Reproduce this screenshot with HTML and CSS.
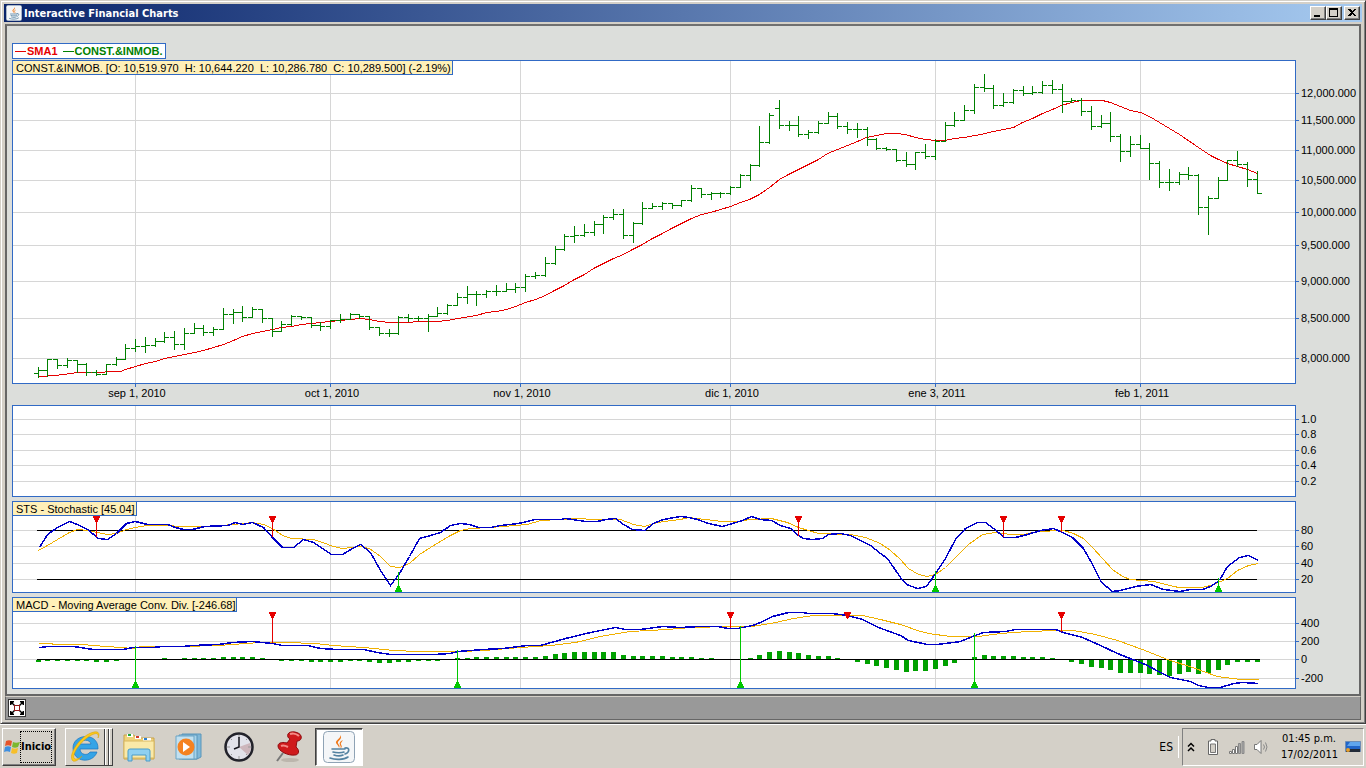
FILE: index.html
```html
<!DOCTYPE html>
<html lang="es">
<head>
    <meta charset="UTF-8">
    <meta name="viewport" content="width=device-width, initial-scale=1.0">
    <title>Interactive Financial Charts</title>
    <link rel="stylesheet" href="styles.css">
</head>
<body>
    <!-- Shared symbols -->
    <svg class="symbols" aria-hidden="true">
        <symbol id="java" viewBox="0 0 32 32">
            <rect x="0.5" y="0.5" width="31" height="31" rx="4" fill="#f4f6f8" stroke="#8fa3b5"/>
            <path d="M17 4c2 3-5 5-4 8 1 2 3 3 3 5 2-3-2-4-1-6 1-2 5-4 2-7zM20 9c-3 1-4 3-3 5s1 2 0 4c4-3 0-4 1-6z" fill="#f07a1c"/>
            <path d="M9 18h13M10 21c3 1 9 1 11 0M11 24c3 1 7 1 9 0M7 27c5 2 14 2 18-1M22 17c5-1 5 4 0 6" fill="none" stroke="#5382a1" stroke-width="1.6" stroke-linecap="round"/>
        </symbol>
    </svg>

    <div class="window">
        <!-- Title bar -->
        <div class="title-bar">
            <svg class="title-icon"><use href="#java"/></svg>
            <h1>Interactive Financial Charts</h1>
            <div class="title-buttons">
                <button aria-label="Minimizar"><svg viewBox="0 0 12 10"><path d="M2 7h6v2H2z"/></svg></button>
                <button aria-label="Maximizar"><svg viewBox="0 0 12 10"><path d="M1 0h9v9H1zM2 2v6h7V2z" fill-rule="evenodd"/></svg></button>
                <button class="close" aria-label="Cerrar"><svg viewBox="0 0 12 10"><path d="M2 1h2l2 2 2-2h2L7 4.500 10 8H8L6 6 4 8H2l3-3.500z"/></svg></button>
            </div>
        </div>

        <!-- Charts -->
        <main class="charts">
            <div class="legend">
                <span class="sma">SMA1</span>
                <span class="price">CONST.&amp;INMOB.</span>
            </div>
            <section class="panel">
                <div class="label">CONST.&amp;INMOB. [O: 10,519.970&nbsp; H: 10,644.220&nbsp; L: 10,286.780&nbsp; C: 10,289.500] (-2.19%)</div>
                <svg id="priceChart" viewBox="12 60 1347 345"></svg>
            </section>
            <section class="panel">
                <svg id="emptyChart" viewBox="12 405 1347 96"></svg>
            </section>
            <section class="panel">
                <div class="label">STS - Stochastic [45.04]</div>
                <svg id="stsChart" viewBox="12 501 1347 96"></svg>
            </section>
            <section class="panel">
                <div class="label">MACD - Moving Average Conv. Div. [-246.68]</div>
                <svg id="macdChart" viewBox="12 597 1347 96"></svg>
            </section>
        </main>

        <div class="toolbar">
            <button aria-label="Ajustar"><svg viewBox="0 0 16 16">
                <path d="M1 1h4v1L4 3l2 2-1 1-2-2-1 1H1zM15 1h-4v1l1 1-2 2 1 1 2-2 1 1h1zM1 15h4v-1l-1-1 2-2-1-1-2 2-1-1H1zM15 15h-4v-1l1-1-2-2 1-1 2 2 1-1h1z"/>
                <rect x="5.500" y="5.500" width="5" height="5" fill="#fff" stroke="#901818"/>
            </svg></button>
        </div>
    </div>

    <!-- Taskbar -->
    <footer class="taskbar">
        <button class="start">
            <svg viewBox="0 0 16 16">
                <path d="M2 2c2-1 4-1 6 0L7 7C5 6 3 6 1 7z" fill="#e5532a"/>
                <path d="M9 3c2 1 4 1 7 0l-2 5c-2 1-4 1-6 0z" fill="#7cb82f"/>
                <path d="M1 8c2-1 4-1 6 0l-1 5c-2-1-4-1-6 0z" fill="#3f8fe0"/>
                <path d="M8 9c2 1 4 1 6 0l-1 5c-2 1-4 1-6 0z" fill="#f7bf2a"/>
            </svg>
            <span>Inicio</span>
        </button>
        <button class="task raised" aria-label="Internet Explorer">
            <svg viewBox="0 0 32 32">
                <path d="M29 18H11c0 6 8 7 10 3h7c-4 12-24 11-24-4C4 2 30 1 29 18zM11 13h11c-1-5-10-5-11 0z" fill="#35a4e6" stroke="#1a74bd" stroke-width="0.700"/>
                <path d="M4 30c-6-5 7-26 21-29 5-1 6 2 4 6 1-4-1-5-4-4C14 7 3 22 5 27c1 2 5 1 8-2-3 4-7 6-9 5z" fill="#fbc91c" stroke="#d99a00" stroke-width="0.500"/>
            </svg>
        </button>
        <button class="task" aria-label="Explorador de Windows">
            <svg viewBox="0 0 32 32">
                <path d="M1 4h10l2 3h18v21H1z" fill="#f0d27a" stroke="#c9a349"/>
                <path d="M4 3h6v3H4zM12 5h6v3h-6zM20 7h8v3h-8z" fill="#fff"/>
                <path d="M5 3h3v2H5z" fill="#1ba83a"/><path d="M13 5h3v2h-3z" fill="#d13b2a"/><path d="M21 7h3v2h-3z" fill="#2a7fd1"/>
                <path d="M1 10h30v17H1z" fill="#fae9a8" stroke="#d8b860"/>
                <path d="M5 30V20q0-2 2-2h18q2 0 2 2v10h-4v-6H9v6z" fill="#8fd0f0" stroke="#4a9cc9"/>
            </svg>
        </button>
        <button class="task" aria-label="Reproductor multimedia">
            <svg viewBox="0 0 32 32">
                <path d="M9 3h19v23l-4 2H9z" fill="#7fb7d8" stroke="#5b96ba"/>
                <path d="M6 4h18v24H6z" fill="#a7d3ea" stroke="#5b96ba"/>
                <path d="M3 5h18v23H3z" fill="#c2e0f0" stroke="#6aa5c6"/>
                <circle cx="13" cy="16" r="8.500" fill="#f58220"/><path d="M10 11v10l7-5z" fill="#fff"/>
            </svg>
        </button>
        <button class="task" aria-label="Reloj">
            <svg viewBox="0 0 32 32">
                <circle cx="16" cy="16" r="13.500" fill="#e2e2ea" stroke="#22222a" stroke-width="2.500"/>
                <path d="M16 16l11-4a12 12 0 0 1-2 12z" fill="#cdb6bc"/>
                <path d="M16 4v3M16 25v3M4 16h3M25 16h3M8 8l1 1M24 8l-1 1M8 24l1-1M24 24l-1-1" stroke="#999"/>
                <path d="M16 6v10l-5 2" fill="none" stroke="#15151d" stroke-width="1.500"/>
            </svg>
        </button>
        <button class="task" aria-label="Notas">
            <svg viewBox="0 0 32 32">
                <ellipse cx="17" cy="29" rx="9" ry="2" fill="#bcb6ad"/>
                <path d="M10 22L4 30" stroke="#777" stroke-width="2"/>
                <path d="M15 3c2-4 12-2 13 2 1 3-1 5-4 5l-1 6c4 3 3 8-1 8-7 1-17-4-17-9 0-4 6-4 9-3l3-4c-2-1-3-3-2-5z" fill="#cf1a1c" stroke="#8f0c10"/>
                <path d="M17 3c3-1 7 0 9 2M8 15c2-1 5 0 7 1" fill="none" stroke="#f48b86" stroke-width="2"/>
            </svg>
        </button>
        <button class="task pressed" aria-label="Interactive Financial Charts"><svg><use href="#java"/></svg></button>

        <span class="lang">ES</span>
        <div class="tray">
            <svg class="chevrons" viewBox="0 0 8 10"><path d="M1 4.500l3-3 3 3M1 9l3-3 3 3"/></svg>
            <svg viewBox="0 0 16 16">
                <path d="M6 .5h4v1.500h2.500v13.500h-9V2H6z" fill="#fff" stroke="#666"/><path d="M5.500 5h5v8.500h-5z" fill="#d4d0c8" stroke="#777"/>
            </svg>
            <svg viewBox="0 0 16 16">
                <path d="M.5 12.500h2v2h-2zM3.500 10.500h2v4h-2zM6.500 7.500h2v7h-2z" fill="#fff" stroke="#777"/>
                <path d="M9.500 4.500h2v10h-2zM13 2.500h2v12h-2z" fill="#aaa" stroke="#888"/>
            </svg>
            <svg viewBox="0 0 16 16">
                <path d="M1.500 5.500H4L8 1.500v13L4 10.500H1.500z" fill="#fff" stroke="#777"/>
                <path d="M10.500 5.500q2 2.500 0 5M12.500 3.500q3 4.500 0 9" fill="none" stroke="#888"/>
            </svg>
            <div class="clock"><time>01:45 p.m.</time><time>17/02/2011</time></div>
            <svg viewBox="0 0 16 16">
                <path d="M.5 2.500h15v10H.5z" fill="#2165c9" stroke="#6d8db5"/><path d="M5 3h10v4H2z" fill="#5fa5ee"/>
                <path d="M1 10h14v3H1z" fill="#222b38"/><circle cx="3" cy="11" r="2" fill="#e39d2c"/>
            </svg>
        </div>
    </footer>

    <script src="charts.js"></script>
</body>
</html>
```

FILE: styles.css
```css
        /* General body styling */
        body {
            margin: 0;
            min-height: 100vh;
            display: flex;
            flex-direction: column;
            background-color: #d4d0c8;
            font-family: 'Liberation Sans', Arial, sans-serif;
            font-size: 11px;
            color: #000;
        }

        button {
            font: inherit;
            color: inherit;
            padding: 0;
            border: 0;
            background: none;
        }

        svg {
            display: block;
            flex-shrink: 0;
        }

        .symbols {
            position: absolute;
            width: 0;
            height: 0;
        }

        /* Window frame */
        .window {
            border: 1px solid #d4d0c8;
            border-right-color: #404040;
            border-bottom-color: #404040;
            box-shadow: inset 1px 1px #fff, inset -1px -1px #808080;
            padding: 3px;
        }

        .title-bar {
            display: flex;
            align-items: center;
            gap: 2px;
            height: 18px;
            padding: 0 2px;
            background: linear-gradient(to right, #0a246a, #a6caf0);
        }

        .title-icon {
            width: 16px;
            height: 16px;
        }

        .title-bar h1 {
            flex: 1;
            margin: 0;
            color: #fff;
            font-family: 'DejaVu Sans Condensed', 'DejaVu Sans', sans-serif;
            font-size: 11px;
            font-weight: bold;
        }

        .title-buttons {
            display: flex;
        }

        .title-buttons button {
            width: 16px;
            height: 14px;
            background-color: #d4d0c8;
            border: 1px solid;
            border-color: #fff #404040 #404040 #fff;
            box-shadow: inset -1px -1px #808080;
        }

        .title-buttons .close {
            margin-left: 2px;
        }

        .title-buttons svg {
            width: 12px;
            height: 10px;
            margin: 1px;
            shape-rendering: crispEdges;
        }

        /* Chart area */
        .charts {
            margin: 2px 1px 0;
            padding: 17px 0 1px 5px;
            background-color: #dcdedb;
            border: 2px solid #666;
            border-top-color: #707070;
        }

        .legend {
            display: flex;
            gap: 5px;
            width: max-content;
            height: 14px;
            line-height: 15px;
            padding: 0 2px;
            margin-bottom: 1px;
            background-color: #fff;
            border: 1px solid #316ac5;
            font-weight: bold;
        }

        .legend span {
            display: flex;
            align-items: center;
            gap: 1px;
        }

        .legend span::before {
            content: "";
            width: 11px;
            height: 1px;
            background-color: currentColor;
        }

        .sma {
            color: #e60000;
        }

        .price {
            color: #008000;
        }

        .panel {
            position: relative;
        }

        .panel svg {
            width: 100%;
            height: auto;
            shape-rendering: crispEdges;
        }

        /* Caption over the top left corner of a panel */
        .label {
            position: absolute;
            top: 0;
            left: 0;
            height: 13px;
            line-height: 14px;
            padding: 0 1px 0 3px;
            background-color: #fff0b8;
            border: 1px solid #316ac5;
            white-space: nowrap;
        }

        .plot {
            fill: #fff;
        }

        .frame {
            fill: none;
            stroke: #316ac5;
        }

        .grid {
            stroke: #d6d6d6;
            fill: none;
        }

        .level {
            stroke: #000;
        }

        .ohlc {
            stroke: #008000;
            fill: none;
        }

        .average {
            stroke: #e60000;
            fill: none;
        }

        .signal {
            stroke: #f0b000;
            fill: none;
        }

        .value {
            stroke: #0000c8;
            stroke-width: 1.5;
            fill: none;
        }

        .histogram {
            fill: #00a000;
        }

        .sell {
            fill: #e60000;
        }

        .buy {
            fill: #00c800;
        }

        .panel text {
            font-size: 11px;
        }

        .month {
            text-anchor: middle;
        }

        /* Toolbar under the charts */
        .toolbar {
            margin: 0 1px;
            padding: 2px;
            height: 18px;
            background-color: #999;
            border: 1px solid #666;
            border-top-color: #d4d0c8;
        }

        .toolbar button {
            background-color: #fff;
            border: 1px solid #333;
        }

        .toolbar svg {
            width: 16px;
            height: 16px;
        }

        /* Taskbar */
        .taskbar {
            display: flex;
            align-items: center;
            flex: 1;
            padding: 0 2px;
            border-top: 1px solid #fff;
            font-family: 'DejaVu Sans Condensed', 'DejaVu Sans', sans-serif;
        }

        .start {
            display: flex;
            align-items: center;
            width: 54px;
            height: 38px;
            padding-left: 1px;
            margin-right: 9px;
            border: 1px solid;
            border-color: #fff #404040 #404040 #fff;
            box-shadow: inset -1px -1px #808080;
            font-weight: bold;
        }

        .start svg {
            width: 16px;
            height: 16px;
        }

        .start span {
            line-height: 30px;
            border: 1px dotted #000;
        }

        .task {
            display: flex;
            align-items: center;
            justify-content: center;
            width: 48px;
            height: 38px;
            margin-right: 2px;
        }

        .task svg {
            width: 32px;
            height: 32px;
        }

        .raised {
            justify-content: flex-start;
            padding-left: 3px;
            border: 1px solid;
            border-color: #fff #404040 #404040 #fff;
            background: linear-gradient(to right, transparent 38px, #404040 38px 39px, #fff 39px 40px, transparent 40px 42px, #404040 42px 43px, #fff 43px 44px, transparent 44px);
        }

        .pressed {
            background-color: #fff;
            border: 1px solid;
            border-color: #404040 #fff #fff #404040;
            box-shadow: inset 1px 1px #808080;
        }

        .lang {
            margin-left: auto;
            padding-right: 5px;
            border-right: 1px solid #fff;
            font-size: 12px;
            line-height: 22px;
        }

        .tray {
            display: flex;
            align-items: center;
            gap: 8px;
            height: 36px;
            margin-left: 3px;
            padding: 0 2px 0 4px;
            border: 1px solid;
            border-color: #808080 #fff #fff #808080;
        }

        .tray svg {
            width: 16px;
            height: 16px;
        }

        .tray .chevrons {
            width: 8px;
            height: 10px;
            margin-right: 2px;
            fill: none;
            stroke: #000;
            stroke-width: 1.5;
        }

        .clock {
            display: flex;
            flex-direction: column;
            width: 56px;
            margin-left: 4px;
            line-height: 16px;
            text-align: center;
            white-space: nowrap;
        }
```

FILE: charts.js
```js
// x position of bar i
function barX(i) {
    return Math.floor(38.1 + 9.753 * i);
}

const months = [[135, 'sep 1, 2010'], [330, 'oct 1, 2010'], [520, 'nov 1, 2010'], [730, 'dic 1, 2010'], [935, 'ene 3, 2011'], [1140, 'feb 1, 2011']];

// high, low, close of each day, as heights on the chart
const days = [
    [367,377,370],[359,376,359],[359,368,365],[358,367,360],[360,372,364],[363,375,372],[370,375,374],[364,374,364],[357,365,359],[344,359,348],
    [339,351,346],[337,352,345],[338,346,341],[332,342,337],[331,349,344],[328,349,333],[323,333,328],[325,335,332],[327,335,329],[308,329,314],
    [309,323,312],[306,321,317],[307,317,309],[309,322,318],[318,336,331],[321,331,324],[315,325,316],[316,319,317],[317,327,325],[322,330,326],
    [320,328,320],[314,322,319],[313,319,314],[314,318,316],[316,329,327],[327,335,333],[329,336,333],[316,334,317],[314,321,318],[316,320,318],
    [314,331,316],[307,316,313],[304,314,305],[293,305,297],[286,303,294],[291,305,294],[290,297,291],[285,295,291],[283,291,289],[283,292,287],
    [274,291,276],[272,278,275],[257,276,263],[246,264,249],[234,250,236],[226,242,235],[224,236,232],[221,235,224],[215,233,217],[209,219,214],
    [209,238,235],[222,242,223],[202,224,208],[203,208,206],[202,209,203],[203,208,205],[200,206,200],[185,201,188],[188,197,194],[192,199,193],
    [192,197,193],[186,194,187],[174,187,175],[164,180,165],[126,166,142],[113,143,115],[100,128,125,108],[121,130,125],[116,136,134],[130,138,132],
    [121,133,123],[112,123,116],[113,128,126],[122,133,129],[123,137,129],[127,145,139],[138,149,148],[147,150,149],[149,161,160],[152,166,164],
    [152,169,152],[144,158,156],[139,159,141],[122,141,125],[112,126,120],[105,120,110],[84,113,87],[74,91,88],[85,108,105],[93,106,102],
    [89,103,90],[86,95,93],[86,94,92],[81,93,85],[80,93,89],[84,112,101],[98,102,100],[98,115,111],[106,129,126],[115,127,123],
    [112,141,136],[134,161,151],[136,156,144],[135,148,148],[143,179,163],[161,187,182],[169,190,182],[172,184,174],[167,179,175],[174,214,207],
    [196,234,198],[177,198,180],[160,180,160],[151,166,164],[162,186,179],[171,193,193]
];

const sma = '39,376 55,375 70,373 77,372 90,372 120,371 125,369 135,366 145,363 155,361 164,358 174,356 184,354 194,352 203,350 213,347 223,344 233,340 242,336 252,333 262,331 272,329 281,327 291,326 301,324 311,323 320,322 330,321 340,320 350,319 359,318 369,319 379,321 389,322 408,322 418,321 437,321 447,320 457,318 476,315 486,312 496,311 506,309 515,306 525,302 535,299 545,295 554,290 564,285 574,279 584,274 593,268 603,263 613,258 623,254 632,249 642,244 652,238 662,233 671,228 681,223 691,218 701,214 710,212 720,209 730,206 740,202 749,199 759,194 769,187 779,179 788,174 798,169 808,164 818,159 827,153 837,149 847,145 857,141 866,137 876,135 886,133 896,133 905,134 915,137 925,139 935,140 944,140 954,138 964,137 980,134 993,131 1003,129 1013,127 1022,122 1032,118 1042,113 1052,109 1061,105 1071,102 1081,100 1102,100 1110,102 1120,106 1130,110 1140,112 1149,116 1159,122 1179,134 1198,147 1210,155 1218,159 1227,163 1237,166 1247,169 1257,173';

const stsValue = '39,547 47,534 57,527 69,521 77,524 87,529 98,538 107,539 116,533 126,523 135,521 147,524 167,524 175,527 183,529 192,529 204,526 227,525 235,522 242,524 252,522 263,527 272,537 282,547 293,547 303,539 313,542 322,548 331,554 342,554 352,548 360,544 370,552 380,570 390,585 399,573 409,556 419,538 430,535 440,532 450,525 460,523 469,524 478,527 490,527 500,525 518,523 535,519 560,519 565,518 572,519 585,521 597,521 605,519 615,518 623,524 632,529 644,530 653,523 663,519 680,516 688,517 697,519 708,523 722,526 732,523 742,520 751,516 760,519 771,520 780,525 790,528 798,535 803,538 812,539 822,538 828,534 840,533 850,535 860,540 870,545 880,553 887,558 900,577 906,584 917,588 926,586 935,573 945,558 955,539 965,528 977,522 985,522 993,528 1004,537 1015,537 1027,534 1040,530 1053,528 1062,532 1072,537 1083,548 1092,564 1101,582 1112,591 1120,590 1135,586 1150,584 1163,589 1179,591 1190,589 1202,589 1210,586 1219,580 1227,566 1239,557 1248,555 1258,560';
const stsSignal = '38,550 47,545 57,539 69,532 77,529 87,530 97,532 107,534 116,533 126,529 135,527 147,525 167,525 180,526 208,526 233,524 252,522 263,524 272,528 282,535 291,538 313,539 322,542 333,546 342,548 360,546 369,548 380,556 390,566 399,567 409,563 419,554 430,547 450,535 460,530 470,528 490,527 527,524 540,520 578,518 593,519 620,519 633,524 644,526 653,523 663,521 680,519 688,517 705,519 722,521 737,521 750,519 771,518 787,522 798,527 808,530 818,533 850,534 865,537 880,543 890,550 900,559 908,568 918,574 927,576 935,574 945,567 955,557 968,544 982,534 995,532 1010,534 1023,534 1037,531 1063,530 1073,533 1083,538 1092,547 1102,558 1112,569 1122,576 1130,579 1153,581 1178,587 1202,587 1213,584 1227,578 1237,570 1248,565 1258,563';

const macdValue = '39,647 48,646 73,646 93,649 122,649 133,647 152,647 162,646 182,646 192,645 218,644 232,642 252,641 272,643 282,645 307,645 320,648 337,649 363,649 377,652 390,654 433,654 450,653 457,651 483,649 503,648 527,645 540,645 565,638 590,632 615,627 625,629 640,629 662,626 680,627 700,626 717,626 728,628 737,628 752,625 760,622 772,616 788,612 802,612 808,613 832,613 847,615 862,619 878,627 900,635 908,640 927,644 937,644 960,641 972,636 983,632 1005,631 1015,629 1055,629 1063,632 1082,637 1100,645 1117,653 1132,659 1145,664 1158,671 1170,677 1190,681 1198,685 1208,687 1220,687 1233,683 1242,682 1258,683';
const macdSignal = '38,643 51,643 53,644 82,644 92,645 120,647 133,648 140,646 182,646 218,645 245,643 260,642 285,642 315,643 333,645 363,647 393,650 417,651 460,651 483,650 520,647 550,645 575,642 600,636 630,631 667,629 690,627 730,626 752,626 775,622 793,618 813,615 862,615 880,619 900,624 917,630 928,633 950,636 978,636 1000,633 1027,631 1057,630 1073,630 1095,634 1117,640 1142,649 1167,659 1192,667 1217,676 1240,679 1258,679';

const histogram = [
    -2,-1,-1,-1,-1,-1,-2,-2,-1,0, 0,0,0,1,0,1,1,1,1,2, 2,2,2,1,0,-1,-1,-1,-2,-2, -2,-2,-1,-1,-2,-3,-3,-2,-2,-1,
    -1,-1,0,1,1,2,2,2,2,2, 2,2,3,5,6,7,7,7,7,7, 4,3,3,3,3,2,2,2,1,1, 0,0,0,1,4,7,8,7,6,4,
    3,3,1,0,-2,-4,-6,-8,-10,-12, -11,-11,-9,-6,-3,0,2,4,3,3, 3,2,2,2,1,0,-2,-4,-7,-8, -10,-13,-13,-13,-14,-15,-16,-14,-12,-14,
    -13,-10,-5,-2,-2,-2
];

// White plot with its grid, series, frame and scale
function drawPanel(id, top, bottom, scale, series) {
    let out = `<rect class="plot" x="12" y="${top}" width="1284" height="${bottom - top}"/>`;
    let ticks = '';
    months.forEach(([x]) => out += `<path class="grid" d="M${x + 0.5} ${top}V${bottom}"/>`);
    scale.forEach(([y, name]) => {
        out += `<path class="grid" d="M12 ${y + 0.5}H1295"/>`;
        ticks += `<path class="frame" d="M1296 ${y + 0.5}h3"/><text x="1301" y="${y + 4}">${name}</text>`;
    });
    out += series + ticks;
    out += `<rect class="frame" x="12.5" y="${top + 0.5}" width="1283" height="${bottom - top}"/>`;
    document.getElementById(id).innerHTML = out;
}

function line(cls, points) {
    return `<polyline class="${cls}" transform="translate(0.5 0.5)" points="${points}"/>`;
}

function sell(x, top, end) {
    return `<path class="sell" d="M${x - 3} ${top}h7v2h-1v2h-1v2h-1V${end}h-1V${top + 6}h-1v-2h-1v-2h-1z"/>`;
}

function buy(x, top, end) {
    return `<path class="buy" d="M${x - 3} ${end}h7v-2h-1v-2h-1v-2h-1V${top}h-1V${end - 6}h-1v2h-1v2h-1z"/>`;
}

let bars = '';
let open = 373;
days.forEach(([high, low, close, gapOpen], i) => {
    const x = barX(i);
    if (gapOpen) open = gapOpen;
    bars += `M${x - 4} ${open + 0.5}h4M${x + 0.5} ${high}V${low + 1}M${x} ${close + 0.5}h5`;
    open = close;
});

let priceSeries = line('average', sma) + `<path class="ohlc" d="${bars}"/>`;
months.forEach(([x, name]) => {
    priceSeries += `<path class="frame" d="M${x + 0.5} 384v3"/><text class="month" x="${x + 2}" y="397">${name}</text>`;
});
drawPanel('priceChart', 60, 383, [[93, '12,000.000'], [120, '11,500.000'], [150, '11,000.000'], [180, '10,500.000'], [212, '10,000.000'], [245, '9,500.000'], [281, '9,000.000'], [318, '8,500.000'], [358, '8,000.000']], priceSeries);

drawPanel('emptyChart', 405, 496, [[419, '1.0'], [434, '0.8'], [450, '0.6'], [465, '0.4'], [481, '0.2']], '');

const stsMarks = sell(96, 516, 537) + sell(272, 516, 537) + sell(798, 516, 536) + sell(1003, 516, 537) + sell(1061, 516, 532)
    + buy(398, 572, 592) + buy(935, 571, 592) + buy(1218, 578, 592);
drawPanel('stsChart', 501, 592, [[530, '80'], [546, '60'], [563, '40'], [579, '20']],
    '<path class="level" d="M37 530.5H1257M37 579.5H1257"/>' + line('signal', stsSignal) + line('value', stsValue) + stsMarks);

let columns = '';
histogram.forEach((h, i) => {
    if (h > 0) columns += `M${barX(i) - 2} ${659 - h}h5V659h-5z`;
    if (h < 0) columns += `M${barX(i) - 2} 660h5v${-h}h-5z`;
});
const macdMarks = sell(272, 612, 643) + sell(730, 612, 628) + sell(847, 612, 619) + sell(1061, 612, 632)
    + buy(135, 646, 688) + buy(457, 650, 688) + buy(740, 626, 688) + buy(974, 633, 688);
drawPanel('macdChart', 597, 688, [[623, '400'], [641, '200'], [659, '0'], [678, '-200']],
    `<path class="histogram" d="${columns}"/><path class="level" d="M37 659.5H1260"/>` + line('signal', macdSignal) + line('value', macdValue) + macdMarks);
```
